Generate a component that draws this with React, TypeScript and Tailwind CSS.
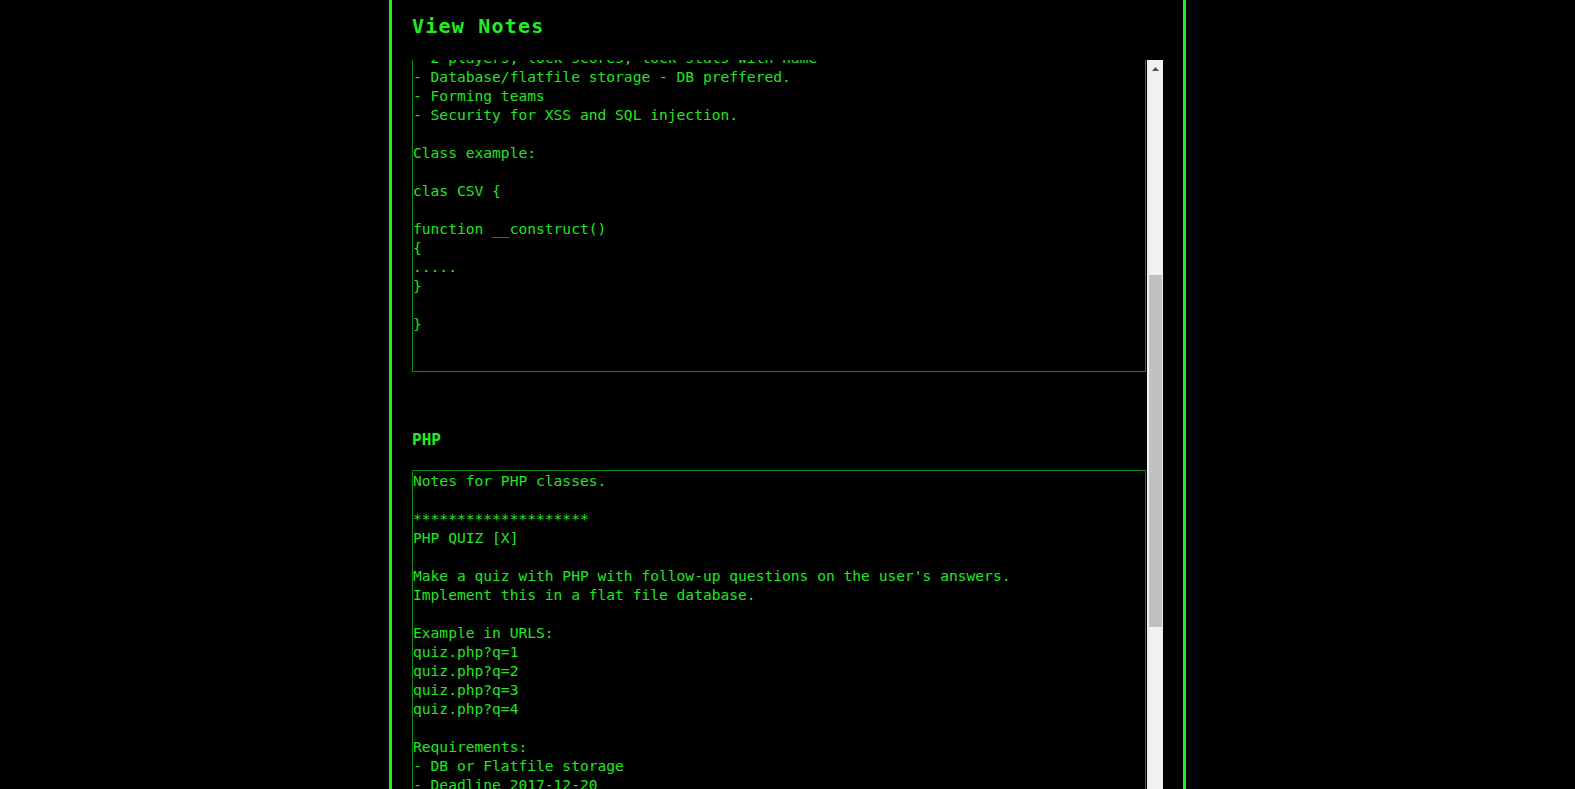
const oopNote = `Notes for OOP classes.

Requirements:
- 2 players, lock scores, lock stats with name
- Database/flatfile storage - DB preffered.
- Forming teams
- Security for XSS and SQL injection.

Class example:

clas CSV {

function __construct()
{
.....
}

}`;

const phpNote = `Notes for PHP classes.

********************
PHP QUIZ [X]

Make a quiz with PHP with follow-up questions on the user's answers.
Implement this in a flat file database.

Example in URLS:
quiz.php?q=1
quiz.php?q=2
quiz.php?q=3
quiz.php?q=4

Requirements:
- DB or Flatfile storage
- Deadline 2017-12-20
- Secure input
********************`;

function Section({
  title,
  text,
  boxClass,
  textClass,
}: {
  title: string;
  text: string;
  boxClass: string;
  textClass: string;
}) {
  return (
    <div>
      <h3 className="mt-[57px] mb-[19px] text-[16px] leading-[22px] font-bold text-[#22ee22]">{title}</h3>
      <div className={`w-[734px] border border-[#0b8a0b] overflow-hidden ${boxClass}`}>
        <div className={`whitespace-pre text-[14.6px] leading-[19px] text-[#22e622] ${textClass}`}>{text}</div>
      </div>
    </div>
  );
}

function Scrollbar() {
  return (
    <div className="w-[16px] shrink-0 bg-[#f1f1f1] flex flex-col">
      <div className="h-[17px] flex items-center justify-center">
        <svg width="7" height="4" viewBox="0 0 7 4">
          <polygon points="3.5,0 7,4 0,4" fill="#505050" />
        </svg>
      </div>
      <div className="mt-[198px] ml-[2px] w-[13px] h-[352px] bg-[#c1c1c1]" />
    </div>
  );
}

export default function App() {
  return (
    <div className="min-h-screen bg-black font-['DejaVu_Sans_Mono',monospace]">
      <div className="mx-auto w-[797px] h-screen border-x-[3px] border-[#22ee22] bg-black flex flex-col px-[20px]">
        <div className="h-[60px] shrink-0 pt-[13px]">
          <h1 className="text-[20px] leading-[26px] font-bold tracking-[1.2px] text-[#22ee22]">View Notes</h1>
        </div>
        <div className="flex flex-1 min-h-0">
          <div className="flex-1 overflow-hidden">
            <div className="-mt-[167px]">
              <Section title="OOP" text={oopNote} boxClass="h-[381px]" textClass="-mt-px" />
              <Section title="PHP" text={phpNote} boxClass="h-[420px]" textClass="" />
            </div>
          </div>
          <Scrollbar />
        </div>
      </div>
    </div>
  );
}
